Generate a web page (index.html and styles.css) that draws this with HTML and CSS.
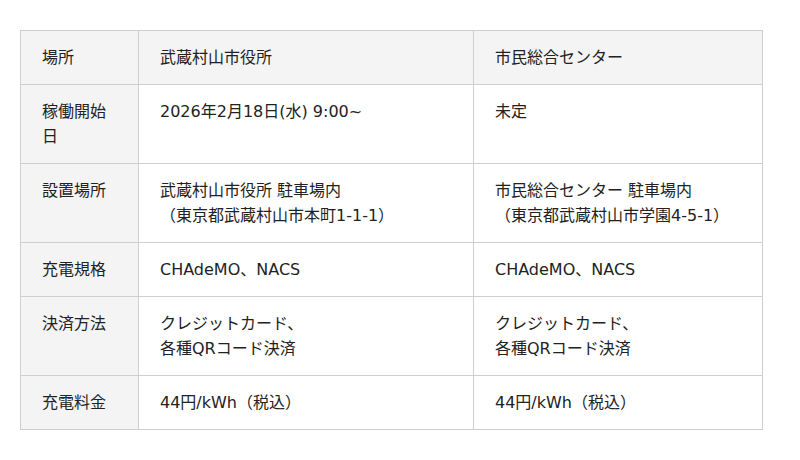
FILE: index.html
```html
<!DOCTYPE html>
<html lang="ja">
<head>
<meta charset="utf-8">
<link rel="stylesheet" href="styles.css">
</head>
<body>
<table class="spec">
  <colgroup>
    <col class="c1"><col class="c2"><col class="c3">
  </colgroup>
  <thead>
    <tr><th>場所</th><th>武蔵村山市役所</th><th>市民総合センター</th></tr>
  </thead>
  <tbody>
    <tr><th>稼働開始日</th><td>2026年2月18日(水) 9:00~</td><td>未定</td></tr>
    <tr><th>設置場所</th><td>武蔵村山市役所 駐車場内<br>（東京都武蔵村山市本町1-1-1）</td><td>市民総合センター 駐車場内<br>（東京都武蔵村山市学園4-5-1）</td></tr>
    <tr><th>充電規格</th><td>CHAdeMO、NACS</td><td>CHAdeMO、NACS</td></tr>
    <tr><th>決済方法</th><td>クレジットカード、<br>各種QRコード決済</td><td>クレジットカード、<br>各種QRコード決済</td></tr>
    <tr><th>充電料金</th><td>44円/kWh（税込）</td><td>44円/kWh（税込）</td></tr>
  </tbody>
</table>
</body>
</html>
```

FILE: styles.css
```css
html, body {
  margin: 0;
  background: #fff;
}
body {
  padding: 30px 20px;
  font-family: "DejaVu Sans", "Noto Sans CJK JP", sans-serif;
  font-size: 16px;
  color: #222;
}
.spec {
  border-collapse: collapse;
  table-layout: fixed;
  width: 742px;
}
.c1 { width: 118px; }
.c2 { width: 335px; }
.c3 { width: 289px; }
.spec th, .spec td {
  border: 1px solid #cfcfcf;
  padding: 14px 21px;
  line-height: 25px;
  text-align: left;
  vertical-align: top;
  font-weight: normal;
}
.spec thead th { background: #f4f4f4; }
.spec tbody th { background: #f4f4f4; }
.spec tbody td { background: #fff; }
```
